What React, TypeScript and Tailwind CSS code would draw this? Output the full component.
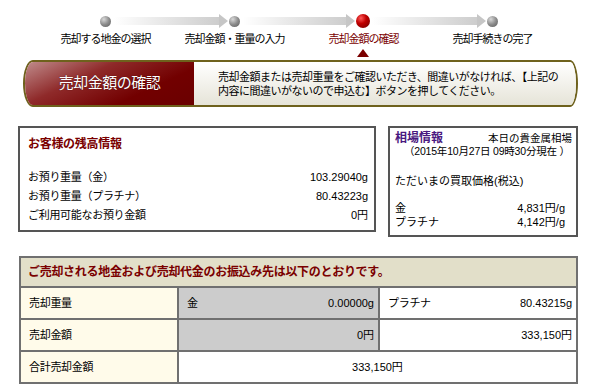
import React from "react";

const font = "font-['Liberation_Sans','Noto_Sans_CJK_JP',sans-serif]";

function Dot({ active }: { active?: boolean }) {
    if (active) {
        return (
            <div className="w-[14px] h-[14px] rounded-full shrink-0 bg-[radial-gradient(circle_at_35%_30%,#ff5a5a_0%,#c00000_40%,#6a0000_100%)]" />
        );
    }
    return (
        <div className="w-[11px] h-[11px] rounded-full shrink-0 bg-[radial-gradient(circle_at_35%_30%,#d8d8d8_0%,#8c8c8c_50%,#5a5a5a_100%)]" />
    );
}

function Arrow({ width }: { width: string }) {
    return (
        <div className={`flex items-center shrink-0 ${width}`}>
            <div className="flex-1 h-[8px] bg-gradient-to-r from-[#ffffff] to-[#cdcdcd]" />
            <div className="w-0 h-0 border-y-[7px] border-y-transparent border-l-[9px] border-l-[#c6c6c6]" />
        </div>
    );
}

export default function App() {
    const steps = [
        { label: "売却する地金の選択" },
        { label: "売却金額・重量の入力" },
        { label: "売却金額の確認", active: true },
        { label: "売却手続きの完了" },
    ];

    return (
        <div className={`w-[612px] h-[385px] overflow-hidden bg-white text-black ${font}`}>
            {/* progress steps */}
            <div className="pt-[14px]">
                <div className="flex items-center h-[14px] pl-[100px]">
                    <Dot />
                    <div className="w-[3px]" />
                    <Arrow width="w-[114px]" />
                    <div className="w-[1px]" />
                    <Dot />
                    <div className="w-[3px]" />
                    <Arrow width="w-[112px]" />
                    <div className="w-[1px]" />
                    <Dot active />
                    <div className="w-[2px]" />
                    <Arrow width="w-[114px]" />
                    <div className="w-[1px]" />
                    <Dot />
                </div>
                <div className="mt-[5px] ml-[41px] grid grid-cols-[repeat(4,129px)] text-[11px] leading-[12px] tracking-[-1px]">
                    {steps.map((s) => (
                        <div key={s.label} className={`text-center ${s.active ? "text-[#7a0000]" : ""}`}>
                            {s.label}
                        </div>
                    ))}
                </div>
                <div className="ml-[357px] mt-[4px] w-0 h-0 border-x-[6px] border-x-transparent border-b-[8px] border-b-[#7a0000]" />
            </div>

            {/* banner */}
            <div className="ml-[23px] mt-[3px] w-[555px] h-[47px] flex border-2 border-[#6e611c] rounded-l-[10px_24px] rounded-r-[8px_24px] overflow-hidden">
                <div className="w-[169px] flex items-center justify-center bg-[linear-gradient(155deg,#c08c8c_0%,#8f2a2a_35%,#720000_70%,#6a0000_100%)] text-white text-[15px] tracking-[-0.5px] [text-shadow:0_0_1px_#300]">
                    売却金額の確認
                </div>
                <div className="flex-1 flex items-center pl-[24px] bg-gradient-to-b from-[#ffffff] to-[#e6e4d8] text-[11px] leading-[14px] tracking-[-0.5px]">
                    <p>
                        売却金額または売却重量をご確認いただき、間違いがなければ、【上記の
                        <br />
                        内容に間違いがないので申込む】ボタンを押してください。
                    </p>
                </div>
            </div>

            {/* info boxes */}
            <div className="flex items-start mt-[19px] ml-[18px] gap-[12px]">
                <div className="w-[358px] h-[106px] border-2 border-[#555555] pt-[9px] pl-[8px] pr-[6px] text-[11px] tracking-[-0.3px]">
                    <h3 className="text-[12px] leading-[14px] font-bold text-[#7a0000]">お客様の残高情報</h3>
                    <div className="mt-[17px] leading-[19px]">
                        <div className="flex justify-between">
                            <span>お預り重量（金）</span>
                            <span className="tracking-normal">103.29040g</span>
                        </div>
                        <div className="flex justify-between">
                            <span>お預り重量（プラチナ）</span>
                            <span className="tracking-normal">80.43223g</span>
                        </div>
                        <div className="flex justify-between">
                            <span>ご利用可能なお預り金額</span>
                            <span className="tracking-normal">0円</span>
                        </div>
                    </div>
                </div>

                <div className="w-[190px] h-[111px] border-2 border-[#555555] pt-[3px] pl-[5px] pr-[4px] text-[11px]">
                    <div className="flex justify-between items-baseline leading-[14px]">
                        <h3 className="text-[12px] font-bold text-[#4a1880]">相場情報</h3>
                        <span className="text-[10.5px]">本日の貴金属相場</span>
                    </div>
                    <div className="pl-[9px] text-[10.5px] leading-[13px] tracking-[-0.2px]">（2015年10月27日 09時30分現在 ）</div>
                    <div className="mt-[16px] leading-[14px]">ただいまの買取価格(税込)</div>
                    <div className="mt-[13px] leading-[14px] pr-[7px]">
                        <div className="flex justify-between">
                            <span>金</span>
                            <span>4,831円/g</span>
                        </div>
                        <div className="flex justify-between">
                            <span>プラチナ</span>
                            <span>4,142円/g</span>
                        </div>
                    </div>
                </div>
            </div>

            {/* sale table */}
            <div className="ml-[19px] mt-[19px] w-[559px] grid grid-cols-[156px_199px_196px] gap-[2px] p-[2px] bg-[#707070] text-[11px] tracking-[-0.3px]">
                <div className="col-span-3 h-[28px] flex items-center pl-[7px] bg-[#e2dfc9] text-[12px] font-bold text-[#7a0000]">
                    ご売却される地金および売却代金のお振込み先は以下のとおりです。
                </div>

                <div className="h-[30px] flex items-center pl-[8px] bg-[#fffbea]">売却重量</div>
                <div className="h-[30px] flex items-center justify-between pl-[8px] pr-[4px] bg-[#cccccc]">
                    <span>金</span>
                    <span className="tracking-normal">0.00000g</span>
                </div>
                <div className="h-[30px] flex items-center justify-between pl-[8px] pr-[4px] bg-white">
                    <span>プラチナ</span>
                    <span className="tracking-normal">80.43215g</span>
                </div>

                <div className="h-[30px] flex items-center pl-[8px] bg-[#fffbea]">売却金額</div>
                <div className="h-[30px] flex items-center justify-end pr-[4px] bg-[#cccccc] tracking-normal">0円</div>
                <div className="h-[30px] flex items-center justify-end pr-[4px] bg-white tracking-normal">333,150円</div>

                <div className="h-[30px] flex items-center pl-[8px] bg-[#fffbea]">合計売却金額</div>
                <div className="col-span-2 h-[30px] flex items-center justify-center bg-white tracking-normal">333,150円</div>
            </div>
        </div>
    );
}
